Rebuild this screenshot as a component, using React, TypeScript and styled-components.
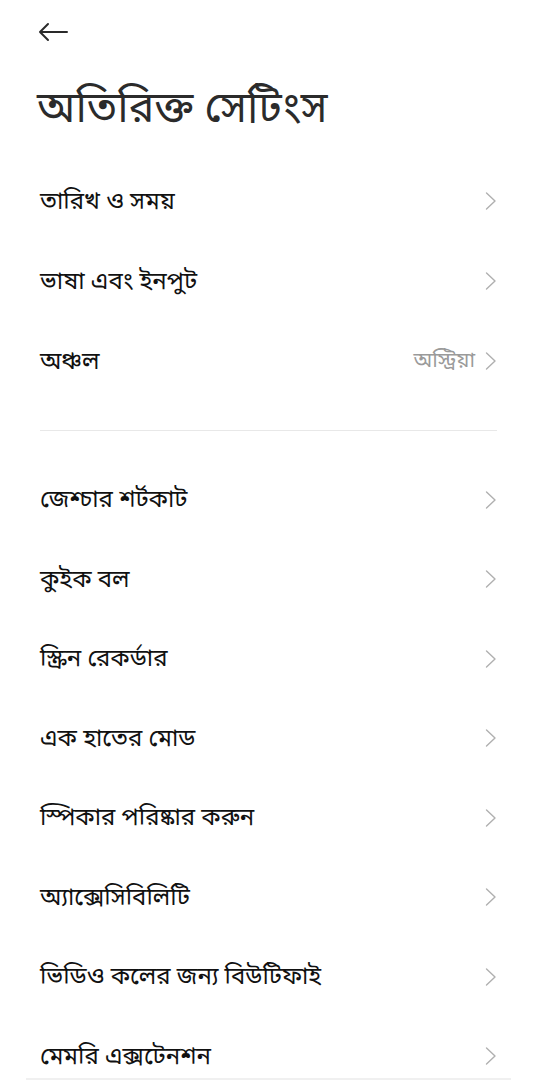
import React from "react";
import styled, { createGlobalStyle } from "styled-components";

const Global = createGlobalStyle`
  html, body { margin: 0; padding: 0; background: #ffffff; }
  body { font-family: "Noto Sans Bengali", "Noto Sans", "Lohit Bengali", sans-serif; }
  * { box-sizing: border-box; }
`;

const Page = styled.div`
  width: 537px;
  height: 1080px;
  overflow: hidden;
  background: #fff;
  position: relative;
`;

const TopBar = styled.div`
  height: 64px;
  padding-left: 38px;
  display: flex;
  align-items: center;
`;

const BackButton = styled.button`
  border: 0;
  background: transparent;
  padding: 0;
  width: 32px;
  height: 32px;
  display: flex;
  align-items: center;
  color: #222;
`;

const Title = styled.h1`
  margin: 0;
  height: 97px;
  padding: 0 0 2px 37px;
  display: flex;
  align-items: center;
  font-size: 43px;
  font-weight: 400;
  color: #2b2b2b;
  line-height: 1;
`;

const Group = styled.div`
  padding: 0 40px;
`;

const Row = styled.div<{ $h: number }>`
  height: ${(p) => p.$h}px;
  display: flex;
  align-items: center;
  justify-content: space-between;
  padding-top: 3px;
`;

const Label = styled.span`
  font-size: 24px;
  color: #111;
  white-space: nowrap;
`;

const Right = styled.span`
  display: flex;
  align-items: center;
  gap: 9px;
  margin-right: -1px;
  margin-top: -3px;
`;

const Value = styled.span`
  font-size: 21px;
  color: #9a9a9a;
  margin-top: 2px;
`;

const Divider = styled.div`
  margin: 29px 40px 29px;
  height: 1px;
  background: #e8e8e8;
`;

const BottomEdge = styled.div`
  position: absolute;
  left: 26px;
  right: 26px;
  bottom: 0;
  height: 2px;
  background: #f0f0f0;
`;

const Chevron = () => (
  <svg width="14" height="20" viewBox="0 0 14 20" fill="none">
    <path d="M2.5 2 L11 10 L2.5 18" stroke="#b0b0b0" strokeWidth="1.4" strokeLinecap="round" strokeLinejoin="round" />
  </svg>
);

const BackArrow = () => (
  <svg width="30" height="20" viewBox="0 0 30 20" fill="none">
    <path d="M2 10 H29 M10 2 L2 10 L10 18" stroke="#2a2a2a" strokeWidth="2" strokeLinecap="round" strokeLinejoin="round" />
  </svg>
);

type Item = { label: string; value?: string };

const group1: Item[] = [
  { label: "তারিখ ও সময়" },
  { label: "ভাষা এবং ইনপুট" },
  { label: "অঞ্চল", value: "অস্ট্রিয়া" },
];

const group2: Item[] = [
  { label: "জেশ্চার শর্টকাট" },
  { label: "কুইক বল" },
  { label: "স্ক্রিন রেকর্ডার" },
  { label: "এক হাতের মোড" },
  { label: "স্পিকার পরিষ্কার করুন" },
  { label: "অ্যাক্সেসিবিলিটি" },
  { label: "ভিডিও কলের জন্য বিউটিফাই" },
  { label: "মেমরি এক্সটেনশন" },
];

const SettingRow = ({ item, h }: { item: Item; h: number }) => (
  <Row $h={h}>
    <Label>{item.label}</Label>
    <Right>
      {item.value && <Value>{item.value}</Value>}
      <Chevron />
    </Right>
  </Row>
);

export default function App() {
  return (
    <Page>
      <Global />
      <TopBar>
        <BackButton aria-label="back">
          <BackArrow />
        </BackButton>
      </TopBar>
      <Title>অতিরিক্ত সেটিংস</Title>
      <Group>
        {group1.map((it) => (
          <SettingRow key={it.label} item={it} h={80} />
        ))}
      </Group>
      <Divider />
      <Group>
        {group2.map((it) => (
          <SettingRow key={it.label} item={it} h={79.5} />
        ))}
      </Group>
      <BottomEdge />
    </Page>
  );
}
